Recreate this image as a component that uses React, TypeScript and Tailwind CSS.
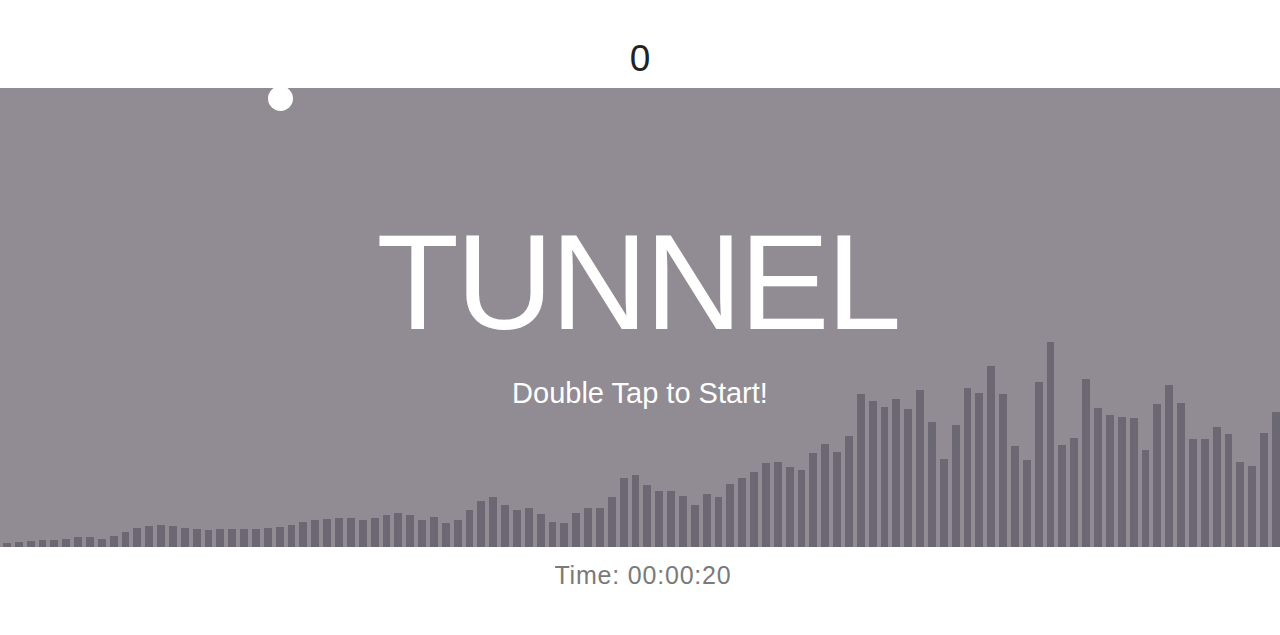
import React from 'react';

// spectrum levels, left to right (px)
const levels = [
  4, 5, 6, 7, 7, 8, 10, 10, 8, 11, 15, 19, 21, 22, 21, 19, 18, 17, 18, 18,
  18, 18, 19, 20, 22, 25, 27, 28, 29, 29, 27, 29, 32, 34, 32, 27, 30, 24, 27, 37,
  46, 50, 42, 37, 39, 33, 25, 24, 34, 39, 39, 50, 69, 72, 62, 56, 56, 51, 42, 53,
  50, 63, 69, 75, 84, 85, 80, 77, 94, 103, 95, 111, 153, 146, 140, 148, 138, 157, 125, 88,
  122, 159, 154, 181, 153, 101, 87, 165, 205, 102, 109, 168, 139, 132, 130, 129, 97, 143, 162, 144,
  108, 108, 120, 113, 85, 81, 114, 135,
];

const font = { fontFamily: '"Liberation Sans", Arial, sans-serif' };

export default function App() {
  return (
    <div className="w-[1280px] h-[635px] bg-white overflow-hidden" style={font}>
      {/* score */}
      <div className="h-[88px] pt-[40px] text-center text-[37px] leading-none text-[#222]">0</div>

      {/* play field */}
      <div className="relative h-[459px] bg-[#918c93] grid">
        <div className="col-start-1 row-start-1 flex items-end gap-[4px] pl-[3px] overflow-hidden">
          {levels.map((h, i) => (
            <div key={i} className="flex-1 shrink-0 bg-[#6b6773]" style={{ height: h }} />
          ))}
        </div>

        <div className="col-start-1 row-start-1 flex flex-col items-center pt-[127px] text-white">
          <h1 className="mr-[5px] text-[135px] leading-none tracking-[-3px]">TUNNEL</h1>
          <p className="mt-[29px] text-[29px] leading-none">Double Tap to Start!</p>
        </div>

        {/* ball */}
        <div className="absolute top-[-2px] left-[268px] w-[25px] h-[25px] rounded-full bg-white" />
      </div>

      <div className="pt-[16px] pl-[6px] text-center text-[25px] leading-none tracking-[0.8px] text-[#7a7a7a]">
        Time: 00:00:20
      </div>
    </div>
  );
}
